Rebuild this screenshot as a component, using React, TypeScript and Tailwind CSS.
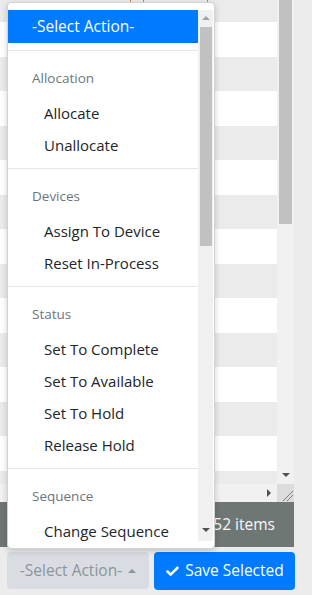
import { Check } from "lucide-react";

const sections = [
  { title: "Allocation", items: ["Allocate", "Unallocate"] },
  { title: "Devices", items: ["Assign To Device", "Reset In-Process"] },
  {
    title: "Status",
    items: ["Set To Complete", "Set To Available", "Set To Hold", "Release Hold"],
  },
  { title: "Sequence", items: ["Change Sequence"] },
];

const rows = Array.from({ length: 14 }, (_, i) => i);

const App = () => {
  return (
    <div className="relative w-[312px] h-[595px] overflow-hidden bg-[#ececec] font-['Open_Sans',sans-serif]">
      {/* grid behind */}
      <div className="flex w-[294px]">
        <div className="flex flex-col w-[277px]">
          <div className="h-[484px] overflow-hidden flex flex-col">
            <div className="relative h-[22px] shrink-0 bg-[#ebebeb]">
              <span className="absolute left-[130px] top-0 w-px h-[3px] bg-[#c8894a]" />
              <span className="absolute left-[143px] top-0 w-px h-[3px] bg-[#c8894a]" />
              <span className="absolute left-[207px] top-0 w-px h-[3px] bg-[#c8894a]" />
            </div>
            {rows.map((i) => (
              <div
                key={i}
                className={
                  i % 2 === 0
                    ? "h-[34.5px] shrink-0 bg-white"
                    : "h-[34.5px] shrink-0 bg-[#ebebeb]"
                }
              />
            ))}
          </div>
          <div className="h-[18px] bg-[#f1f1f1] flex items-center justify-end pr-[6px]">
            <span className="w-0 h-0 border-y-[4px] border-y-transparent border-l-[4px] border-l-[#505050]" />
          </div>
        </div>
        <div className="flex flex-col w-[17px]">
          <div className="h-[484px] bg-[#f1f1f1] flex flex-col items-center">
            <div className="w-[13px] h-[224px] bg-[#c1c1c1]" />
            <div className="mt-auto mb-[7px] w-0 h-0 border-x-[4px] border-x-transparent border-t-[4px] border-t-[#505050]" />
          </div>
          <div className="h-[18px] bg-[#dcdcdc] relative">
            <svg width="17" height="18" viewBox="0 0 17 18" className="absolute inset-0">
              <path d="M6 17 L16 7 M10 17 L16 11" stroke="#808080" strokeWidth="1" />
            </svg>
          </div>
        </div>
      </div>

      {/* footer bar */}
      <div className="w-[294px] h-[45px] bg-[#6f7774] flex items-center justify-end pr-[19px]">
        <span className="text-[#f8f9fa] text-[15.5px]">52 items</span>
      </div>

      {/* buttons */}
      <div className="flex gap-[5px] pl-[7px] pt-[5px]">
        <div className="w-[142px] h-[37px] rounded-[4px] bg-[#d9dde3] flex items-center justify-center gap-[6px] text-[#8d949a] text-[15.5px]">
          <span>-Select Action-</span>
          <span className="w-0 h-0 border-x-[4px] border-x-transparent border-b-[4px] border-b-[#8d949a]" />
        </div>
        <div className="w-[141px] h-[38px] rounded-[4px] bg-[#007bff] flex items-center justify-center gap-[5px] text-white text-[15.5px]">
          <Check size={15} strokeWidth={4} />
          <span>Save Selected</span>
        </div>
      </div>

      {/* dropdown */}
      <div className="absolute left-[7px] top-[2px] w-[208px] h-[547px] bg-white border border-[#d2d2d2] rounded-[4px] shadow-[0_2px_6px_rgba(0,0,0,0.18)] pt-[7px]">
        <div className="flex h-[531px] overflow-hidden mr-[1px]">
          <div className="flex-1 flex flex-col">
            <div className="h-[33px] shrink-0 bg-[#007bff] text-white text-[15.5px] flex items-center pl-[24px]">
              -Select Action-
            </div>
            {sections.map((s) => (
              <div key={s.title} className="flex flex-col shrink-0">
                <div className="mt-[7px] h-px bg-[#e6e6e6]" />
                <div className="mt-[9px] h-[37px] flex items-center pl-[24px] text-[13.5px] text-[#6c757d]">
                  {s.title}
                </div>
                {s.items.map((it) => (
                  <div
                    key={it}
                    className="h-[32px] flex items-center pl-[36px] text-[15px] text-[#212529]"
                  >
                    {it}
                  </div>
                ))}
              </div>
            ))}
          </div>
          <div className="w-[15px] bg-[#f0f0f0] flex flex-col items-center">
            <div className="mt-[6px] w-0 h-0 border-x-[4px] border-x-transparent border-b-[4px] border-b-[#a3a3a3]" />
            <div className="mt-[7px] w-[12px] h-[219px] bg-[#c1c1c1]" />
            <div className="mt-auto mb-[9px] w-0 h-0 border-x-[4px] border-x-transparent border-t-[4px] border-t-[#505050]" />
          </div>
        </div>
      </div>
    </div>
  );
};

export default App;
